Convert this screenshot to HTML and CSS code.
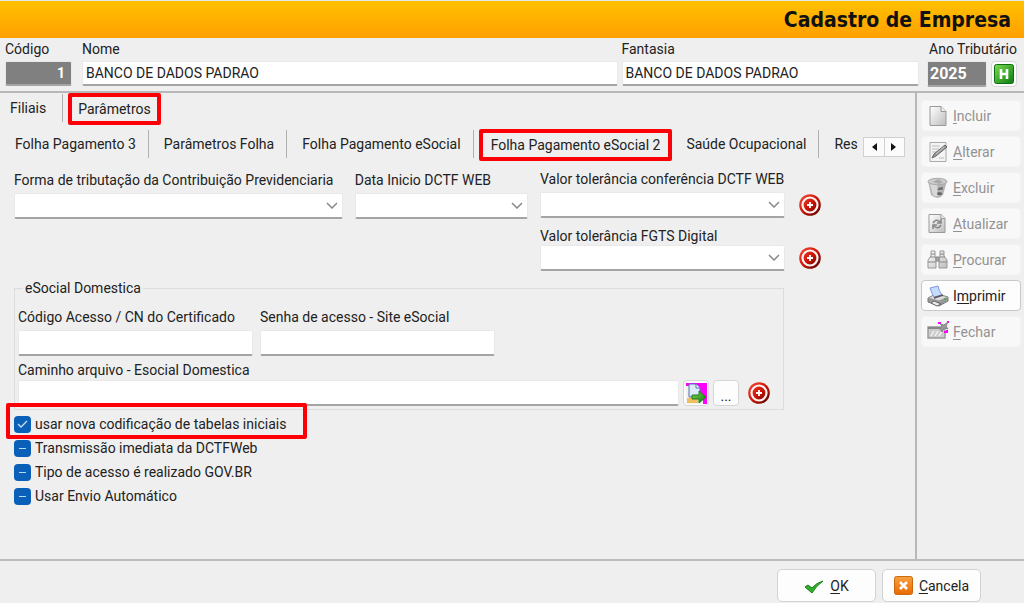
FILE: index.html
```html
<!DOCTYPE html>
<html lang="pt-BR">
  <head>
    <meta charset="UTF-8" />
    <meta name="viewport" content="width=device-width, initial-scale=1.0" />
    <title>Cadastro de Empresa</title>
    <link rel="stylesheet" href="styles.css">
  </head>
  <body>
    <svg class="defs" aria-hidden="true">
      <defs>
        <linearGradient id="red" x1="0" y1="0" x2="1" y2="1">
          <stop offset="0" stop-color="#f8503c" />
          <stop offset="0.5" stop-color="#cc1408" />
          <stop offset="1" stop-color="#4a0000" />
        </linearGradient>
        <linearGradient id="green" x1="0" y1="0" x2="1" y2="1">
          <stop offset="0" stop-color="#7ddc50" />
          <stop offset="1" stop-color="#0a7a10" />
        </linearGradient>
        <linearGradient id="orange" x1="0" y1="0" x2="0" y2="1">
          <stop offset="0" stop-color="#f9a040" />
          <stop offset="1" stop-color="#e86a00" />
        </linearGradient>
        <linearGradient id="grey" x1="0" y1="0" x2="1" y2="1">
          <stop offset="0" stop-color="#ffffff" />
          <stop offset="1" stop-color="#bdbdbd" />
        </linearGradient>
        <symbol id="target" viewBox="0 0 22 22">
          <circle cx="11" cy="11" r="10.8" fill="url(#red)" />
          <circle cx="11" cy="11" r="7.5" fill="none" stroke="#fff4f0" stroke-width="2.2" />
          <path d="M11 8v6M8 11h6" stroke="#fff" stroke-width="1.8" />
        </symbol>
      </defs>
    </svg>

    <header class="title-bar">
      <h1>Cadastro de Empresa</h1>
    </header>

    <section class="company">
      <div class="field field-code">
        <label for="codigo">Código</label>
        <input id="codigo" class="locked" type="text" value="1" />
      </div>
      <div class="field field-name">
        <label for="nome">Nome</label>
        <input id="nome" type="text" value="BANCO DE DADOS PADRAO" />
      </div>
      <div class="field field-fantasy">
        <label for="fantasia">Fantasia</label>
        <input id="fantasia" type="text" value="BANCO DE DADOS PADRAO" />
      </div>
      <div class="field field-year">
        <label for="ano">Ano Tributário</label>
        <div class="inline">
          <input id="ano" class="locked" type="text" value="2025" />
          <button class="small-btn" type="button" aria-label="Histórico">
            <svg width="20" height="20" viewBox="0 0 20 20">
              <rect x="0.5" y="0.5" width="19" height="19" rx="2" fill="url(#green)" stroke="#0c6e10" />
              <path d="M7 5v10M13 5v10M7 10h6" stroke="#fff" stroke-width="2.6" fill="none" />
            </svg>
          </button>
        </div>
      </div>
    </section>

    <div class="content">
      <main class="panel">
        <nav class="tabs">
          <button type="button" class="tab">Filiais</button>
          <button type="button" class="tab highlight">Parâmetros</button>
        </nav>
        <nav class="tabs subtabs">
          <button type="button" class="tab">Folha Pagamento 3</button>
          <button type="button" class="tab">Parâmetros Folha</button>
          <button type="button" class="tab">Folha Pagamento eSocial</button>
          <button type="button" class="tab highlight">Folha Pagamento eSocial 2</button>
          <button type="button" class="tab">Saúde Ocupacional</button>
          <button type="button" class="tab tab-cut">Res</button>
          <div class="tab-scroll">
            <button type="button" aria-label="Anterior">
              <svg width="6" height="8"><path d="M6 0v8L1 4z" fill="#111" /></svg>
            </button>
            <button type="button" aria-label="Próxima">
              <svg width="6" height="8"><path d="M0 0v8l5-4z" fill="#111" /></svg>
            </button>
          </div>
        </nav>

        <form class="form">
          <div class="top-fields">
            <div class="field">
              <label for="forma">Forma de tributação da Contribuição Previdenciaria</label>
              <select id="forma"><option></option></select>
            </div>
            <div class="field">
              <label for="inicio">Data Inicio DCTF WEB</label>
              <select id="inicio"><option></option></select>
            </div>
            <div class="tolerances">
              <div class="inline">
                <div class="field">
                  <label for="tolDctf">Valor tolerância conferência DCTF WEB</label>
                  <select id="tolDctf"><option></option></select>
                </div>
                <button type="button" class="icon-btn" aria-label="Adicionar">
                  <svg width="22" height="22"><use href="#target" /></svg>
                </button>
              </div>
              <div class="inline">
                <div class="field field-tight">
                  <label for="tolFgts">Valor tolerância FGTS Digital</label>
                  <select id="tolFgts"><option></option></select>
                </div>
                <button type="button" class="icon-btn" aria-label="Adicionar">
                  <svg width="22" height="22"><use href="#target" /></svg>
                </button>
              </div>
            </div>
          </div>

          <fieldset class="group">
            <legend>eSocial Domestica</legend>
            <div class="access">
              <div class="field">
                <label for="certificado">Código Acesso / CN do Certificado</label>
                <input id="certificado" type="text" />
              </div>
              <div class="field">
                <label for="senha">Senha de acesso - Site eSocial</label>
                <input id="senha" type="text" />
              </div>
            </div>
            <label for="caminho">Caminho arquivo - Esocial Domestica</label>
            <div class="inline path-row">
              <input id="caminho" type="text" />
              <button class="small-btn" type="button" aria-label="Importar">
                <svg width="21" height="21" viewBox="0 0 21 21">
                  <path d="M0 0h21v21H0z" fill="#ff00ff" />
                  <path d="M0 3h3v10h10l4 4v4H0z" fill="#f3f3ee" />
                  <path d="M1 15h11v5H1z" fill="#f0c060" />
                  <path d="M3 1h7l4 4v9H3z" fill="#dcebff" stroke="#5573a5" />
                  <path d="M10 1v4h4" fill="#fff" stroke="#5573a5" />
                  <path d="M6 12h7V8l7 6-7 6v-4H6z" fill="url(#green)" stroke="#267a18" />
                </svg>
              </button>
              <button class="small-btn dots" type="button">...</button>
              <button type="button" class="icon-btn" aria-label="Adicionar">
                <svg width="22" height="22"><use href="#target" /></svg>
              </button>
            </div>
          </fieldset>

          <div class="checks">
            <label class="check highlight"><input type="checkbox" checked />usar nova codificação de tabelas iniciais</label>
            <label class="check"><input type="checkbox" class="partial" />Transmissão imediata da DCTFWeb</label>
            <label class="check"><input type="checkbox" class="partial" />Tipo de acesso é realizado GOV.BR</label>
            <label class="check"><input type="checkbox" class="partial" />Usar Envio Automático</label>
          </div>
        </form>
      </main>

      <aside class="sidebar">
        <button type="button" class="action" disabled>
          <svg width="22" height="22" viewBox="0 0 22 22">
            <path d="M3 1.5h11l5 5v14H3z" fill="url(#grey)" stroke="#999" />
            <path d="M14 1.5v5h5" fill="#eee" stroke="#999" />
          </svg>
          <span><u>I</u>ncluir</span>
        </button>
        <button type="button" class="action" disabled>
          <svg width="22" height="22" viewBox="0 0 22 22">
            <path d="M3 1.5h16v19H3z" fill="#f4f4f4" stroke="#aaa" />
            <path d="M5 5h8M5 8h7M5 11h5M12 17h5" stroke="#bbb" />
            <path d="M5 17l2-4L18 4l2 2L9 15z" fill="#999" stroke="#666" />
            <path d="M9 13l8-7" stroke="#ccc" />
          </svg>
          <span><u>A</u>lterar</span>
        </button>
        <button type="button" class="action" disabled>
          <svg width="22" height="22" viewBox="0 0 22 22">
            <path d="M1 4l3 14q7 6 12 0l4-14z" fill="#b4b4b4" />
            <path d="M3 7l3 11q2 2 5 1L10 7z" fill="#d8d8d8" />
            <ellipse cx="10.500" cy="4.500" rx="9.500" ry="3.200" fill="#ccc" stroke="#aaa" />
            <path d="M6 5l5-3 5 3-4 2z" fill="#aaa" />
            <path d="M11 13q2-3 4-1M15 16q-2 3-4 0M15 10v2h-3M11 18v-2h3" stroke="#666" stroke-width="1.4" fill="none" />
          </svg>
          <span><u>E</u>xcluir</span>
        </button>
        <button type="button" class="action" disabled>
          <svg width="22" height="22" viewBox="0 0 22 22">
            <path d="M2 1.5h12l4 4v14H2z" fill="url(#grey)" stroke="#999" />
            <path d="M14 1.5v4h4" fill="#eee" stroke="#999" />
            <path d="M6 10q3-5 7-1M14 12q-3 5-7 1M14 6v4h-4M6 16v-4h4" stroke="#888" stroke-width="1.6" fill="none" />
          </svg>
          <span><u>A</u>tualizar</span>
        </button>
        <button type="button" class="action" disabled>
          <svg width="22" height="22" viewBox="0 0 22 22">
            <path d="M4 2h4v5l1 3v9H1v-8l3-4zM13 2h4v5l3 4v8h-8v-9l1-3z" fill="url(#grey)" stroke="#999" />
            <path d="M9 8h3v4H9zM4 5h4M13 5h4M3 8h5M13 8h5M1 13h8M12 13h8" fill="#aaa" stroke="#888" />
          </svg>
          <span><u>P</u>rocurar</span>
        </button>
        <button type="button" class="action">
          <svg width="22" height="22" viewBox="0 0 22 22">
            <path d="M1 13l8-4 12 3v4l-9 5-11-4z" fill="#999" stroke="#777" />
            <path d="M1 13l8-4 12 3-9 4z" fill="#ddd" stroke="#999" />
            <path d="M3 3l8-2q1 5 4 9l-8 2Q5 9 3 3z" fill="#c5dcff" stroke="#8098dc" />
            <path d="M7 13l9-3" stroke="#555" stroke-width="1.4" />
            <path d="M4 18l6 3 4-2-7-3z" fill="#eee" stroke="#666" />
            <circle cx="18" cy="14" r="1" fill="#4a4" />
          </svg>
          <span>I<u>m</u>primir</span>
        </button>
        <button type="button" class="action" disabled>
          <svg width="22" height="22" viewBox="0 0 22 22">
            <path d="M1 6h17v11H1z" fill="#ccc" stroke="#999" stroke-width="1.4" />
            <path d="M1 7h17" stroke="#888" stroke-width="2" />
            <path d="M4 15l3-5M8 15l3-5M12 15l3-5" stroke="#f4f4f4" stroke-width="1.4" />
            <path d="M11 2h3M20 1h2M20 9v3M17 11h2" stroke="#f0f" stroke-width="2" />
            <path d="M13 8l2-3-2-2 4 1 4-3-2 4 2 3-4-1-2 4z" fill="#999" stroke="#888" />
          </svg>
          <span><u>F</u>echar</span>
        </button>
      </aside>
    </div>

    <footer class="footer">
      <button type="button" class="dialog-btn">
        <svg width="20" height="18" viewBox="0 0 20 18">
          <path d="M1 10l3-2 4 3q4-5 11-7Q12 9 8 16z" fill="#2fae2a" stroke="#18811a" />
        </svg>
        <span><u>O</u>K</span>
      </button>
      <button type="button" class="dialog-btn">
        <svg width="19" height="19" viewBox="0 0 19 19">
          <rect x="0.5" y="0.5" width="18" height="18" rx="2" fill="url(#orange)" stroke="#c96a10" />
          <path d="M6 6l7 7M13 6l-7 7" stroke="#fff" stroke-width="2.6" />
        </svg>
        <span><u>C</u>ancela</span>
      </button>
    </footer>

    <script>
      document.querySelectorAll(".partial").forEach((box) => {
        box.indeterminate = true;
      });
    </script>
  </body>
</html>
```
FILE: styles.css
```css
* {
  box-sizing: border-box;
}
body {
  margin: 0;
  min-height: 100vh;
  display: flex;
  flex-direction: column;
  background: #efefef;
  color: #222;
  font-family: Roboto, "Liberation Sans", sans-serif;
  font-size: 14px;
  line-height: 18px;
}
button,
input,
select {
  font: inherit;
  color: inherit;
  margin: 0;
}
button {
  padding: 0;
  border: none;
  background: none;
  white-space: nowrap;
}
svg {
  display: block;
  flex: none;
}
u {
  text-underline-offset: 2px;
}
.defs {
  position: absolute;
  width: 0;
  height: 0;
}

.title-bar {
  height: 38px;
  padding-right: 13px;
  border-top: 1px solid #e8e8e8;
  background: linear-gradient(#ffc000, #ffa000);
  text-align: right;
}
.title-bar h1 {
  margin: 0;
  color: #111;
  font-family: "DejaVu Sans Condensed", "DejaVu Sans", sans-serif;
  font-size: 21px;
  line-height: 38px;
}

.field {
  display: flex;
  flex-direction: column;
  gap: 4px;
}
label,
legend {
  white-space: nowrap;
}
.inline {
  display: flex;
}
input[type="text"],
select {
  width: 100%;
  height: 26px;
  padding: 0 3px;
  border: 1px solid #e9e9e9;
  border-bottom: 2px solid #a4a4a4;
  border-radius: 2px;
  background: #fff;
  outline: none;
}
select {
  appearance: none;
  background: #fff url("data:image/svg+xml,%3Csvg xmlns='http://www.w3.org/2000/svg' width='12' height='7'%3E%3Cpath d='M1 1l5 5 5-5' fill='none' stroke='%23888' stroke-width='1.5'/%3E%3C/svg%3E") no-repeat right 4px center;
}

.company {
  display: flex;
  padding: 2px 5px 5px;
  height: 55px;
  border-bottom: 2px solid #b8b8b8;
}
.field-code {
  width: 67px;
  margin-right: 10px;
}
.field-name {
  flex: 540 1 0;
  margin-right: 4px;
}
.field-fantasy {
  flex: 300 1 0;
  margin-right: 8px;
}
.field-year {
  width: 92px;
}
.field-year label {
  align-self: center;
}
.field-year .inline {
  gap: 4px;
}
.company .field {
  gap: 3px;
}
.company .locked {
  background: #808080;
  color: #fff;
  font-weight: bold;
}
#codigo {
  text-align: right;
  padding-right: 6px;
}
#ano {
  width: 60px;
  padding: 0 2px;
  font-size: 16px;
}

.small-btn {
  flex: none;
  display: flex;
  align-items: center;
  justify-content: center;
  width: 26px;
  height: 26px;
  border: 1px solid #d6d6d6;
  border-radius: 4px;
  background: #fdfdfd;
}
.dots {
  padding-top: 6px;
}

.content {
  flex: 1;
  display: flex;
}
.panel {
  flex: 1;
  min-width: 0;
}
.sidebar {
  display: flex;
  flex-direction: column;
  gap: 5px;
  width: 109px;
  padding: 7px 3px 7px 4px;
  border-left: 2px solid #b8b8b8;
}

.tabs {
  display: flex;
  height: 32px;
}
.tab {
  position: relative;
  height: 28px;
  padding: 0 16px 0 10px;
  margin-top: 1px;
  border-right: 1px solid #b0b0b0;
}
.tabs .highlight {
  height: 32px;
  margin: 0 0 0 5px;
  padding: 0 6px;
}
.highlight {
  border: 4px solid #fb0006;
  border-radius: 2px;
}
.subtabs {
  position: relative;
  margin: 4px 10px 0 5px;
}
.subtabs .tab {
  padding-right: 12px;
  margin-right: 5px;
}
.subtabs .highlight {
  margin: 0 4px 0 0;
  padding: 0 8px;
}
.subtabs .tab-cut {
  border: none;
}
.tab-scroll {
  position: absolute;
  right: 0;
  top: 8px;
  display: flex;
  width: 42px;
  height: 20px;
  border: 1px solid #d0d0d0;
  background: #fbfbfb;
}
.tab-scroll button {
  flex: 1;
  display: flex;
  align-items: center;
  justify-content: center;
}
.tab-scroll button + button {
  border-left: 1px solid #d0d0d0;
}

.form {
  padding: 9px 131px 0 14px;
}
.top-fields {
  display: grid;
  grid-template-columns: 330fr 174fr 281px;
  gap: 12px;
  margin-right: -37px;
}
.top-fields > .field {
  padding-top: 1px;
}
.tolerances {
  display: flex;
  flex-direction: column;
  gap: 9px;
}
.tolerances .field {
  flex: 1;
}
.tolerances .field-tight {
  gap: 0;
}
.tolerances .icon-btn {
  margin-left: 14px;
}
.icon-btn {
  align-self: flex-end;
  margin-bottom: 2px;
}

.group {
  min-width: 0;
  margin: 8px 0 0;
  padding: 0 3px 3px;
  border: 1px solid #dcdcdc;
}
.group legend {
  margin-left: 5px;
  padding: 0 2px;
}
.access {
  display: grid;
  grid-template-columns: 235px 235px;
  gap: 7px;
  padding: 11px 0 5px;
}
.path-row {
  gap: 4px;
  padding: 1px 10px 0 0;
}
.path-row input {
  flex: 1;
  width: auto;
}
.path-row .icon-btn {
  margin-left: 5px;
}

.checks {
  display: flex;
  flex-direction: column;
  align-items: flex-start;
  gap: 6px;
  padding-top: 5px;
}
.check {
  position: relative;
  display: flex;
  align-items: center;
  gap: 4px;
}
.check.highlight {
  border: none;
}
/* frame drawn over the neighbours */
.check.highlight::after {
  content: "";
  position: absolute;
  inset: -12px -21px -6px -8px;
  border: 4px solid #fb0006;
  border-radius: 2px;
}
.check input {
  appearance: none;
  width: 17px;
  height: 17px;
  border-radius: 4px;
  background: #0a5fb8 no-repeat center;
}
.check input:checked {
  background-image: url("data:image/svg+xml,%3Csvg xmlns='http://www.w3.org/2000/svg' width='11' height='9'%3E%3Cpath d='M1 4l3 3 6-6' fill='none' stroke='%23c9e0f5' stroke-width='1.3'/%3E%3C/svg%3E");
}
.check input:indeterminate {
  background-image: linear-gradient(#b9d6ef, #b9d6ef);
  background-size: 7px 1px;
}

.action {
  display: flex;
  align-items: center;
  gap: 4px;
  height: 31px;
  padding-left: 5px;
  border: 1px solid #f4f4f4;
  border-radius: 4px;
  background: #f8f8f8;
}
.action:disabled {
  color: #929292;
}
.action:enabled {
  border-color: #c8c8c8;
  background: #fdfdfd;
}

.footer {
  display: flex;
  justify-content: flex-end;
  gap: 6px;
  height: 44px;
  padding: 8px 43px 2px;
  border-top: 2px solid #bcbcbc;
}
.dialog-btn {
  display: flex;
  align-items: center;
  justify-content: center;
  gap: 6px;
  width: 99px;
  height: 33px;
  border: 1px solid #d2d2d2;
  border-radius: 5px;
  background: #fdfdfd;
}
```
